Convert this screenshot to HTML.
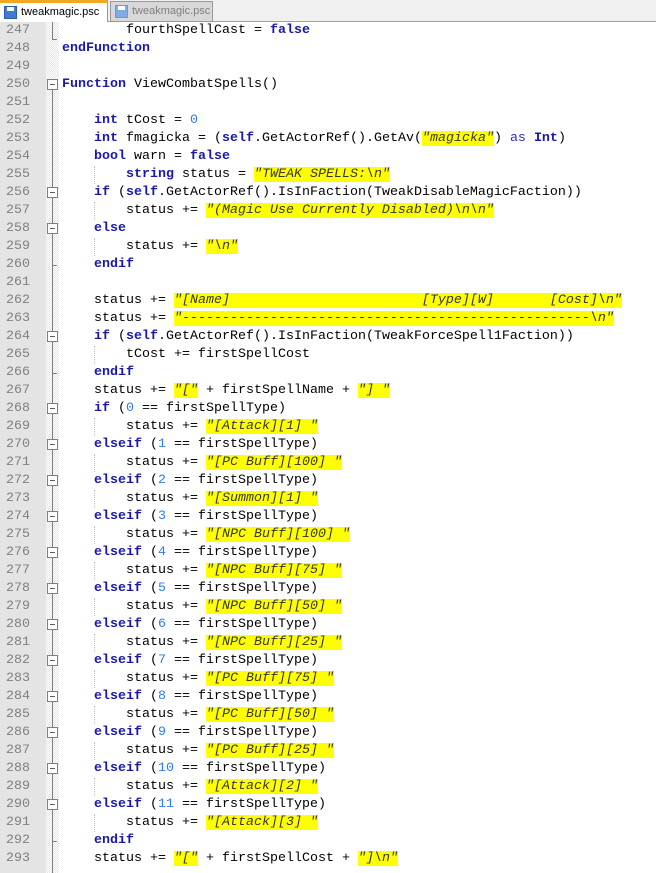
<!DOCTYPE html>
<html><head><meta charset="utf-8"><style>
*{margin:0;padding:0;box-sizing:border-box}
body{width:656px;height:873px;overflow:hidden;background:#fff;position:relative;font-family:"Liberation Mono",monospace;font-size:13.33px}
#tabs{position:absolute;left:0;top:0;width:656px;height:22px;background:#f0f0f0;border-bottom:1px solid #a0a0a0}
.tab{position:absolute;top:1px;height:21px;font-family:"Liberation Sans",sans-serif;font-size:11px;line-height:19px;padding-left:21px}
.t1{left:0;width:108px;background:#fff;border-top:3px solid #f5a623;border-right:1px solid #999;top:0;height:22px;color:#000}
.t2{left:110px;width:103px;background:#d8d8d8;border:1px solid #999;color:#808080}
.ico{position:absolute;left:4px;top:3px;width:13px;height:13px;background:#3a7bd5;border:1px solid #2a5ea8}
.ico:after{content:"";position:absolute;left:2px;top:0;width:7px;height:4px;background:#fff}
.t2 .ico{background:#7aaee8;border-color:#6a9ad0}
#gut{position:absolute;left:0;top:22px;width:46px;height:851px;background:#e4e4e4}
#fold{position:absolute;left:46px;top:22px;width:13px;height:851px;background-color:#fff;background-image:repeating-conic-gradient(#e6e6e6 0 25%,#fff 0 50%);background-size:2px 2px}
.ln{position:absolute;left:0;width:30px;text-align:right;color:#808080;height:18px;line-height:18px}
.l{position:absolute;left:62px;height:18px;line-height:18px;white-space:pre;color:#000}
.k{color:#1a1aa6;font-weight:bold}
.a{color:#2a2ad0}
.n{color:#2f7cf0}
.s{background:#ffff00;font-style:italic;color:#333}
.vl{position:absolute;left:52px;width:1px;background:#808080}
.bx{position:absolute;left:47px;width:11px;height:11px;border:1px solid #808080;background:#fff}
.bx:after{content:"";position:absolute;left:2px;top:4px;width:5px;height:1px;background:#606060}
.tk{position:absolute;left:52px;width:5px;height:1px;background:#808080}
.g{position:absolute;width:1px;border-left:1px dotted #c0c0c0}
</style></head><body>
<div id="tabs">
<div class="tab t1"><div class="ico"></div>tweakmagic.psc</div>
<div class="tab t2"><div class="ico"></div>tweakmagic.psc</div>
</div>
<div id="gut"></div><div id="fold"></div>
<div class="vl" style="top:22px;height:18px"></div>
<div class="tk" style="top:39px"></div>
<div class="vl" style="top:80px;height:793px"></div>
<div id="c"></div>
<script>
var L=[
[247,'        fourthSpellCast = <span class="k">false</span>'],
[248,'<span class="k">endFunction</span>'],
[249,''],
[250,'<span class="k">Function</span> ViewCombatSpells()'],
[251,''],
[252,'    <span class="k">int</span> tCost = <span class="n">0</span>'],
[253,'    <span class="k">int</span> fmagicka = (<span class="k">self</span>.GetActorRef().GetAv(<span class="s">"magicka"</span>) <span class="a">as</span> <span class="k">Int</span>)'],
[254,'    <span class="k">bool</span> warn = <span class="k">false</span>'],
[255,'        <span class="k">string</span> status = <span class="s">"TWEAK SPELLS:\\n"</span>'],
[256,'    <span class="k">if</span> (<span class="k">self</span>.GetActorRef().IsInFaction(TweakDisableMagicFaction))'],
[257,'        status += <span class="s">"(Magic Use Currently Disabled)\\n\\n"</span>'],
[258,'    <span class="k">else</span>'],
[259,'        status += <span class="s">"\\n"</span>'],
[260,'    <span class="k">endif</span>'],
[261,''],
[262,'    status += <span class="s">"[Name]                        [Type][W]       [Cost]\\n"</span>'],
[263,'    status += <span class="s">"---------------------------------------------------\\n"</span>'],
[264,'    <span class="k">if</span> (<span class="k">self</span>.GetActorRef().IsInFaction(TweakForceSpell1Faction))'],
[265,'        tCost += firstSpellCost'],
[266,'    <span class="k">endif</span>'],
[267,'    status += <span class="s">"["</span> + firstSpellName + <span class="s">"] "</span>'],
[268,'    <span class="k">if</span> (<span class="n">0</span> == firstSpellType)'],
[269,'        status += <span class="s">"[Attack][1] "</span>'],
[270,'    <span class="k">elseif</span> (<span class="n">1</span> == firstSpellType)'],
[271,'        status += <span class="s">"[PC Buff][100] "</span>'],
[272,'    <span class="k">elseif</span> (<span class="n">2</span> == firstSpellType)'],
[273,'        status += <span class="s">"[Summon][1] "</span>'],
[274,'    <span class="k">elseif</span> (<span class="n">3</span> == firstSpellType)'],
[275,'        status += <span class="s">"[NPC Buff][100] "</span>'],
[276,'    <span class="k">elseif</span> (<span class="n">4</span> == firstSpellType)'],
[277,'        status += <span class="s">"[NPC Buff][75] "</span>'],
[278,'    <span class="k">elseif</span> (<span class="n">5</span> == firstSpellType)'],
[279,'        status += <span class="s">"[NPC Buff][50] "</span>'],
[280,'    <span class="k">elseif</span> (<span class="n">6</span> == firstSpellType)'],
[281,'        status += <span class="s">"[NPC Buff][25] "</span>'],
[282,'    <span class="k">elseif</span> (<span class="n">7</span> == firstSpellType)'],
[283,'        status += <span class="s">"[PC Buff][75] "</span>'],
[284,'    <span class="k">elseif</span> (<span class="n">8</span> == firstSpellType)'],
[285,'        status += <span class="s">"[PC Buff][50] "</span>'],
[286,'    <span class="k">elseif</span> (<span class="n">9</span> == firstSpellType)'],
[287,'        status += <span class="s">"[PC Buff][25] "</span>'],
[288,'    <span class="k">elseif</span> (<span class="n">10</span> == firstSpellType)'],
[289,'        status += <span class="s">"[Attack][2] "</span>'],
[290,'    <span class="k">elseif</span> (<span class="n">11</span> == firstSpellType)'],
[291,'        status += <span class="s">"[Attack][3] "</span>'],
[292,'    <span class="k">endif</span>'],
[293,'    status += <span class="s">"["</span> + firstSpellCost + <span class="s">"]\\n"</span>']
];
var boxes=[250,256,258,264,268,270,272,274,276,278,280,282,284,286,288,290];
var ticks=[260,266,292];
var h='';
L.forEach(function(r,i){var y=22+i*18;
h+='<div class="ln" style="top:'+y+'px">'+r[0]+'</div>';
h+='<div class="l" style="top:'+y+'px">'+r[1]+'</div>';
if(boxes.indexOf(r[0])>=0)h+='<div class="bx" style="top:'+(y+3)+'px"></div>';
if(ticks.indexOf(r[0])>=0)h+='<div class="tk" style="top:'+(y+9)+'px"></div>';
var ind=r[1].match(/^ */)[0].length;
if(ind>=8&&r[0]>250)h+='<div class="g" style="left:94px;top:'+y+'px;height:18px"></div>';
});
document.getElementById('c').innerHTML=h;
</script>
</body></html>
